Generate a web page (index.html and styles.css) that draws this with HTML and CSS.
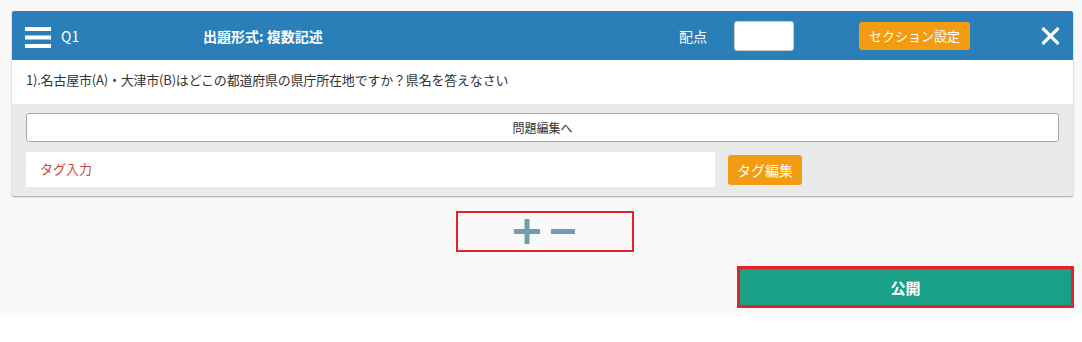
FILE: index.html
```html
<!DOCTYPE html>
<html lang="ja">
<head>
<meta charset="UTF-8">
<meta name="viewport" content="width=device-width, initial-scale=1.0">
<title>問題編集</title>
<link rel="stylesheet" href="styles.css">
</head>
<body>
<div class="page">
  <div class="card">
    <div class="card-head">
      <svg class="menu-icon" width="26" height="22" viewBox="0 0 26 22">
        <rect x="0" y="0" width="26" height="4" fill="#fff"/>
        <rect x="0" y="8.5" width="26" height="4" fill="#fff"/>
        <rect x="0" y="17" width="26" height="4" fill="#fff"/>
      </svg>
      <span class="q-num">Q1</span>
      <span class="q-type">出題形式: 複数記述</span>
      <span class="score-label">配点</span>
      <input class="score-input" type="text">
      <button class="btn-orange btn-section">セクション設定</button>
      <svg class="close-icon" width="19" height="18" viewBox="0 0 19 18">
        <path d="M1.5 1 L17.5 17 M17.5 1 L1.5 17" stroke="#fff" stroke-width="3.2" fill="none"/>
      </svg>
    </div>
    <div class="question">1).名古屋市(A)・大津市(B)はどこの都道府県の県庁所在地ですか？県名を答えなさい</div>
    <div class="card-body">
      <button class="btn-edit">問題編集へ</button>
      <div class="tag-row">
        <div class="tag-input">タグ入力</div>
        <button class="btn-orange btn-tag">タグ編集</button>
      </div>
    </div>
  </div>

  <div class="controls">
    <div class="pm-box">
      <svg width="26" height="25" viewBox="0 0 26 25">
        <rect x="0" y="10" width="26" height="5" fill="#6f9db2"/>
        <rect x="10.5" y="0" width="5" height="25" fill="#6f9db2"/>
      </svg>
      <svg width="24" height="5" viewBox="0 0 24 5">
        <rect x="0" y="0" width="24" height="5" fill="#6f9db2"/>
      </svg>
    </div>
  </div>

  <div class="publish-row">
    <button class="btn-publish">公開</button>
  </div>
</div>
</body>
</html>
```

FILE: styles.css
```css
html, body {
  margin: 0;
  background: #fff;
  font-family: "Noto Sans CJK JP", "Noto Sans", sans-serif;
  color: #333;
}
.page {
  background: #f9f9f9;
  padding: 11px 9px 7px 12px;
}
.card {
  background: #e9eaea;
  border-radius: 2px;
  box-shadow: 0 1px 2px rgba(0, 0, 0, 0.35);
  overflow: hidden;
}
.card-head {
  height: 49px;
  background: #2a7fb8;
  display: flex;
  align-items: center;
  padding: 0 13px;
  color: #fff;
  font-size: 14px;
}
.menu-icon {
  display: block;
  margin-top: 4px;
}
.q-num {
  width: 142px;
  margin-left: 10px;
}
.q-type {
  flex: 1;
  font-weight: bold;
}
.score-label {
  margin-right: 27px;
}
.score-input {
  width: 60px;
  height: 30px;
  box-sizing: border-box;
  border: 1px solid #ccc;
  border-radius: 3px;
  background: #fff;
  margin: 0 65px 0 0;
  padding: 0;
}
.btn-orange {
  background: #f39c12;
  color: #fff;
  border: none;
  border-radius: 3px;
  font-family: inherit;
  font-size: 13px;
  padding: 0;
}
.btn-section {
  width: 111px;
  height: 28px;
  margin-right: 71px;
}
.close-icon {
  display: block;
}
.question {
  background: #fff;
  height: 44px;
  line-height: 40px;
  padding-left: 14px;
  font-size: 13px;
  letter-spacing: -0.2px;
  color: #333;
}
.card-body {
  padding: 9px 14px 9px 14px;
}
.btn-edit {
  display: block;
  width: 100%;
  height: 29px;
  background: #fff;
  border: 1px solid #aaa;
  border-radius: 3px;
  font-family: inherit;
  font-size: 12px;
  color: #333;
  padding: 0;
}
.tag-row {
  display: flex;
  align-items: center;
  margin-top: 10px;
}
.tag-input {
  width: 689px;
  height: 35px;
  line-height: 33px;
  background: #fff;
  box-sizing: border-box;
  padding-left: 14px;
  color: #d0463b;
  font-size: 13px;
}
.btn-tag {
  width: 74px;
  height: 30px;
  margin-left: 13px;
  font-size: 14px;
}
.controls {
  display: flex;
  justify-content: center;
  padding: 15px 0 0 5px;
}
.pm-box {
  width: 178px;
  height: 41px;
  box-sizing: border-box;
  border: 2px solid #e8202a;
  display: flex;
  align-items: center;
  justify-content: center;
  gap: 11px;
  padding-right: 2px;
}
.pm-box svg {
  display: block;
}
.publish-row {
  display: flex;
  justify-content: flex-end;
  margin-top: 14px;
  margin-right: -1px;
}
.btn-publish {
  width: 337px;
  height: 42px;
  background: #19a086;
  border: 3px solid #e8202a;
  color: #fff;
  font-family: inherit;
  font-size: 15px;
  font-weight: bold;
  padding: 0;
}
```
